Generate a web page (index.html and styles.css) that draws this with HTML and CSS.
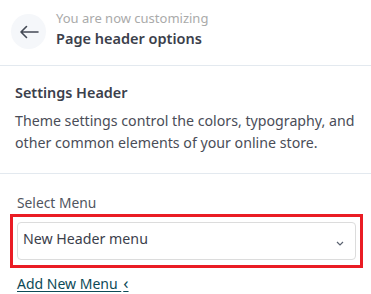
FILE: index.html
```html
<!doctype html>
<html lang="en">
  <head>
    <meta charset="UTF-8">
    <title>Page header options</title>
    <link rel="stylesheet" href="styles.css">
  </head>
  <body>
<header class="top">
  <button class="back" type="button" aria-label="Back">
    <svg width="20" height="14" viewBox="0 0 20 14"><path d="M19 7H2M7.5 1.5L2 7l5.5 5.5" fill="none" stroke="#444a55" stroke-width="1.6" stroke-linecap="round" stroke-linejoin="round"/></svg>
  </button>
  <div class="titles">
    <span class="hint">You are now customizing</span>
    <span class="title">Page header options</span>
  </div>
</header>
<section class="intro">
  <h2>Settings Header</h2>
  <p>Theme settings control the colors, typography, and other common elements of your online store.</p>
</section>
<section class="menu">
  <label for="menu">Select Menu</label>
  <div class="focus">
    <div class="select" id="menu">
      <span>New Header menu</span>
      <svg width="8" height="5" viewBox="0 0 8 5"><path d="M1 1l3 3 3-3" fill="none" stroke="#5a6270" stroke-width="1.2"/></svg>
    </div>
  </div>
  <a class="add" href="#">Add New Menu <span class="chev">&lsaquo;</span></a>
</section>
  </body>
</html>
```
FILE: styles.css
```css
html, body {
  margin: 0;
  background: white;
  font-family: "Noto Sans", sans-serif;
  color: #3b404b;
}
.top {
  display: flex;
  align-items: center;
  gap: 10px;
  padding: 14px 11px 16px;
  border-bottom: 1.5px solid #e3e9ef;
}
.back {
  width: 35px;
  height: 35px;
  border: 0;
  border-radius: 50%;
  background: #f5f7fa;
  display: flex;
  align-items: center;
  justify-content: center;
  padding: 0;
}
.titles {
  display: flex;
  flex-direction: column;
  gap: 3px;
  margin-top: -6px;
}
.hint {
  font-size: 13px;
  color: #aaa;
  line-height: 15px;
}
.title {
  font-size: 14.5px;
  font-weight: 600;
  line-height: 18px;
}
.intro {
  padding: 18px 6px 19px 15px;
  border-bottom: 1.5px solid #e3e9ef;
}
.intro h2 {
  margin: 0 0 8px;
  font-size: 14.4px;
  font-weight: 600;
  line-height: 18px;
}
.intro p {
  margin: 0;
  font-size: 14.2px;
  line-height: 22px;
  color: #4a4d58;
}
.menu {
  padding: 20px 8px 0 10px;
  display: flex;
  flex-direction: column;
}
.menu label {
  padding-left: 7px;
  font-size: 13.8px;
  color: #505560;
  line-height: 18px;
  margin-bottom: 2px;
}
.focus {
  border: 3px solid #ea1c24;
  padding: 5px 4px;
}
.select {
  display: flex;
  align-items: center;
  justify-content: space-between;
  height: 36px;
  padding: 0 11px 0 5px;
  border: 1px solid #dcdcdc;
  border-radius: 4px;
  font-size: 14.2px;
  color: #3b404b;
}
.select span {
  margin-bottom: 5px;
}
.select svg {
  margin-top: 4px;
}
.add {
  align-self: flex-start;
  margin: 6px 0 0 7px;
  font-size: 14px;
  color: #0d4a57;
  text-decoration-thickness: 1px;
  text-underline-offset: 2px;
}
.chev {
  font-size: 17px;
  line-height: 14px;
  margin-left: 2px;
}
```
